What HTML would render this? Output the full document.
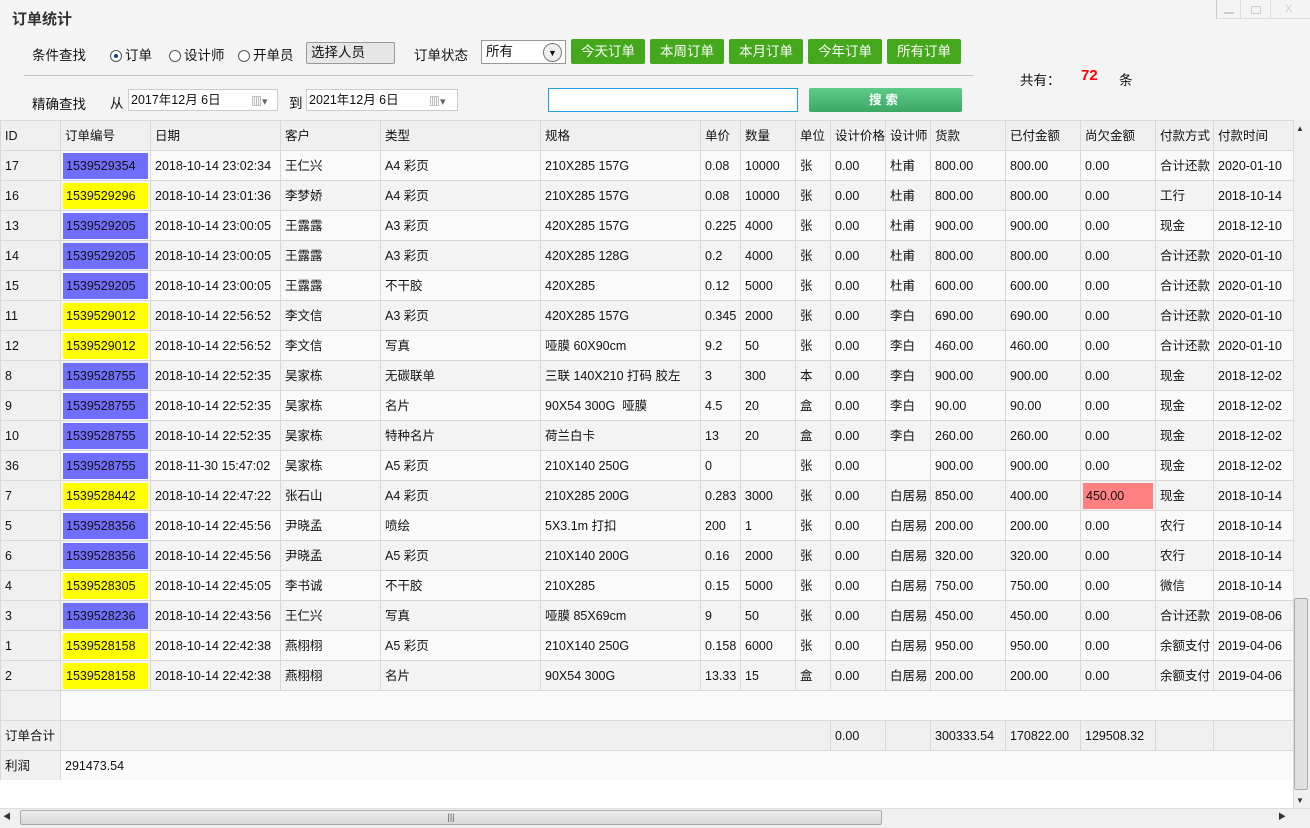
<!DOCTYPE html>
<html><head><meta charset="utf-8">
<style>
*{margin:0;padding:0;box-sizing:border-box}
body{width:1310px;height:828px;background:#f4f4f4;font-family:"Liberation Sans","Noto Sans CJK SC",sans-serif;font-size:12.5px;color:#111;position:relative;overflow:hidden}
.a{position:absolute;white-space:nowrap}
.btn{position:absolute;top:39px;height:25px;background:#45a81c;color:#fff;font-size:13.5px;text-align:center;line-height:25px;border-radius:2px}
.rad{display:inline-block;width:12px;height:12px;border:1px solid #555;border-radius:50%;vertical-align:-2px;margin-right:3px;background:#fff;position:relative}
.rad.on::after{content:"";position:absolute;left:3px;top:3px;width:4px;height:4px;border-radius:50%;background:#1a3a8a}
table{position:absolute;left:0;top:120px;border-collapse:collapse;table-layout:fixed;width:1293px}
td{height:30px;line-height:28px;border:1px solid #d8d8d8;padding:0 4px;white-space:nowrap;overflow:hidden;background:#fafafa;vertical-align:middle}
tr:nth-child(odd) td{background:#f3f3f3}
tr.h td{background:#f0f0f0}
td:first-child{background:#f0f0f0!important}
td.b,td.y,td.r{padding:0}
td.b span,td.y span,td.r span{display:block;margin:1px 2px;height:26px;line-height:26px;padding-left:3px}
td.b span{background:#6f6ffc}
td.y span{background:#ffff00}
td.r span{background:#ff8080}
</style></head><body>
<div class="a" style="left:12px;top:8px;font-size:15px;font-weight:bold;color:#333">订单统计</div>
<div class="a" style="left:1216px;top:0;width:94px;height:19px;border-left:1px solid #ccc;border-bottom:1px solid #ddd"></div>
<div class="a" style="left:1240px;top:0;height:19px;border-left:1px solid #ddd"></div>
<div class="a" style="left:1270px;top:0;height:19px;border-left:1px solid #ddd"></div>
<div class="a" style="left:1224px;top:12px;width:10px;height:2px;background:#ccc"></div>
<div class="a" style="left:1251px;top:6px;width:10px;height:8px;border:1px solid #ccc"></div>
<div class="a" style="left:1285px;top:3px;color:#ccc;font-size:11px">X</div>

<div class="a" style="left:32px;top:44px;font-size:13.5px">条件查找</div>
<div class="a" style="left:110px;top:44px;font-size:13.5px"><span class="rad on"></span>订单</div>
<div class="a" style="left:169px;top:44px;font-size:13.5px"><span class="rad"></span>设计师</div>
<div class="a" style="left:238px;top:44px;font-size:13.5px"><span class="rad"></span>开单员</div>
<div class="a" style="left:306px;top:42px;width:89px;height:22px;border:1px solid #999;border-radius:2px;background:#e6e6e6;padding:2px 4px;font-size:13.5px;line-height:16px">选择人员</div>
<div class="a" style="left:414px;top:44px;font-size:13.5px">订单状态</div>
<div class="a" style="left:481px;top:40px;width:85px;height:24px;border:1px solid #999;background:#fff;padding:3px 4px;font-size:13.5px;line-height:16px">所有</div>
<div class="a" style="left:543px;top:43px;width:19px;height:19px;border:1px solid #777;border-radius:50%;background:#eee;font-size:9px;text-align:center;line-height:18px">▼</div>
<div class="btn" style="left:571px;width:74px">今天订单</div>
<div class="btn" style="left:650px;width:74px">本周订单</div>
<div class="btn" style="left:729px;width:74px">本月订单</div>
<div class="btn" style="left:808px;width:74px">今年订单</div>
<div class="btn" style="left:887px;width:74px">所有订单</div>
<div class="a" style="left:24px;top:75px;width:950px;height:1px;background:#c4c4c4"></div>
<div class="a" style="left:1020px;top:69px;font-size:13.5px">共有：</div>
<div class="a" style="left:1081px;top:67px;font-size:15px;font-weight:bold;color:#f00">72</div>
<div class="a" style="left:1119px;top:69px;font-size:13.5px">条</div>

<div class="a" style="left:32px;top:93px;font-size:13.5px">精确查找</div>
<div class="a" style="left:110px;top:92px;font-size:13.5px">从</div>
<div class="a" style="left:128px;top:89px;width:150px;height:22px;background:#fff;border:1px solid #ccc;padding:3px 2px;line-height:15px">2017年12月 6日</div>
<div class="a" style="left:251px;top:93px;color:#666;font-size:11px">▥▾</div>
<div class="a" style="left:289px;top:92px;font-size:13.5px">到</div>
<div class="a" style="left:306px;top:89px;width:152px;height:22px;background:#fff;border:1px solid #ccc;padding:3px 2px;line-height:15px">2021年12月 6日</div>
<div class="a" style="left:429px;top:93px;color:#666;font-size:11px">▥▾</div>
<div class="a" style="left:548px;top:88px;width:250px;height:24px;background:#fff;border:1px solid #1ea0e8"></div>
<div class="a" style="left:809px;top:88px;width:153px;height:24px;background:linear-gradient(#5fcb8a,#3da864);border-radius:2px;color:#fff;font-weight:bold;text-align:center;line-height:24px;letter-spacing:4px">搜索</div>

<table>
<colgroup><col style="width:60px"><col style="width:90px"><col style="width:130px"><col style="width:100px"><col style="width:160px"><col style="width:160px"><col style="width:40px"><col style="width:55px"><col style="width:35px"><col style="width:55px"><col style="width:45px"><col style="width:75px"><col style="width:75px"><col style="width:75px"><col style="width:58px"><col style="width:80px"></colgroup>
<tr class="h"><td>ID</td><td>订单编号</td><td>日期</td><td>客户</td><td>类型</td><td>规格</td><td>单价</td><td>数量</td><td>单位</td><td>设计价格</td><td>设计师</td><td>货款</td><td>已付金额</td><td>尚欠金额</td><td>付款方式</td><td>付款时间</td></tr>
<tr><td>17</td><td class="b"><span>1539529354</span></td><td>2018-10-14 23:02:34</td><td>王仁兴</td><td>A4 彩页</td><td>210X285 157G</td><td>0.08</td><td>10000</td><td>张</td><td>0.00</td><td>杜甫</td><td>800.00</td><td>800.00</td><td>0.00</td><td>合计还款</td><td>2020-01-10</td></tr>
<tr><td>16</td><td class="y"><span>1539529296</span></td><td>2018-10-14 23:01:36</td><td>李梦娇</td><td>A4 彩页</td><td>210X285 157G</td><td>0.08</td><td>10000</td><td>张</td><td>0.00</td><td>杜甫</td><td>800.00</td><td>800.00</td><td>0.00</td><td>工行</td><td>2018-10-14</td></tr>
<tr><td>13</td><td class="b"><span>1539529205</span></td><td>2018-10-14 23:00:05</td><td>王露露</td><td>A3 彩页</td><td>420X285 157G</td><td>0.225</td><td>4000</td><td>张</td><td>0.00</td><td>杜甫</td><td>900.00</td><td>900.00</td><td>0.00</td><td>现金</td><td>2018-12-10</td></tr>
<tr><td>14</td><td class="b"><span>1539529205</span></td><td>2018-10-14 23:00:05</td><td>王露露</td><td>A3 彩页</td><td>420X285 128G</td><td>0.2</td><td>4000</td><td>张</td><td>0.00</td><td>杜甫</td><td>800.00</td><td>800.00</td><td>0.00</td><td>合计还款</td><td>2020-01-10</td></tr>
<tr><td>15</td><td class="b"><span>1539529205</span></td><td>2018-10-14 23:00:05</td><td>王露露</td><td>不干胶</td><td>420X285</td><td>0.12</td><td>5000</td><td>张</td><td>0.00</td><td>杜甫</td><td>600.00</td><td>600.00</td><td>0.00</td><td>合计还款</td><td>2020-01-10</td></tr>
<tr><td>11</td><td class="y"><span>1539529012</span></td><td>2018-10-14 22:56:52</td><td>李文信</td><td>A3 彩页</td><td>420X285 157G</td><td>0.345</td><td>2000</td><td>张</td><td>0.00</td><td>李白</td><td>690.00</td><td>690.00</td><td>0.00</td><td>合计还款</td><td>2020-01-10</td></tr>
<tr><td>12</td><td class="y"><span>1539529012</span></td><td>2018-10-14 22:56:52</td><td>李文信</td><td>写真</td><td>哑膜 60X90cm</td><td>9.2</td><td>50</td><td>张</td><td>0.00</td><td>李白</td><td>460.00</td><td>460.00</td><td>0.00</td><td>合计还款</td><td>2020-01-10</td></tr>
<tr><td>8</td><td class="b"><span>1539528755</span></td><td>2018-10-14 22:52:35</td><td>吴家栋</td><td>无碳联单</td><td>三联 140X210 打码 胶左</td><td>3</td><td>300</td><td>本</td><td>0.00</td><td>李白</td><td>900.00</td><td>900.00</td><td>0.00</td><td>现金</td><td>2018-12-02</td></tr>
<tr><td>9</td><td class="b"><span>1539528755</span></td><td>2018-10-14 22:52:35</td><td>吴家栋</td><td>名片</td><td>90X54 300G &nbsp;哑膜</td><td>4.5</td><td>20</td><td>盒</td><td>0.00</td><td>李白</td><td>90.00</td><td>90.00</td><td>0.00</td><td>现金</td><td>2018-12-02</td></tr>
<tr><td>10</td><td class="b"><span>1539528755</span></td><td>2018-10-14 22:52:35</td><td>吴家栋</td><td>特种名片</td><td>荷兰白卡</td><td>13</td><td>20</td><td>盒</td><td>0.00</td><td>李白</td><td>260.00</td><td>260.00</td><td>0.00</td><td>现金</td><td>2018-12-02</td></tr>
<tr><td>36</td><td class="b"><span>1539528755</span></td><td>2018-11-30 15:47:02</td><td>吴家栋</td><td>A5 彩页</td><td>210X140 250G</td><td>0</td><td></td><td>张</td><td>0.00</td><td></td><td>900.00</td><td>900.00</td><td>0.00</td><td>现金</td><td>2018-12-02</td></tr>
<tr><td>7</td><td class="y"><span>1539528442</span></td><td>2018-10-14 22:47:22</td><td>张石山</td><td>A4 彩页</td><td>210X285 200G</td><td>0.283</td><td>3000</td><td>张</td><td>0.00</td><td>白居易</td><td>850.00</td><td>400.00</td><td class="r"><span>450.00</span></td><td>现金</td><td>2018-10-14</td></tr>
<tr><td>5</td><td class="b"><span>1539528356</span></td><td>2018-10-14 22:45:56</td><td>尹晓孟</td><td>喷绘</td><td>5X3.1m 打扣</td><td>200</td><td>1</td><td>张</td><td>0.00</td><td>白居易</td><td>200.00</td><td>200.00</td><td>0.00</td><td>农行</td><td>2018-10-14</td></tr>
<tr><td>6</td><td class="b"><span>1539528356</span></td><td>2018-10-14 22:45:56</td><td>尹晓孟</td><td>A5 彩页</td><td>210X140 200G</td><td>0.16</td><td>2000</td><td>张</td><td>0.00</td><td>白居易</td><td>320.00</td><td>320.00</td><td>0.00</td><td>农行</td><td>2018-10-14</td></tr>
<tr><td>4</td><td class="y"><span>1539528305</span></td><td>2018-10-14 22:45:05</td><td>李书诚</td><td>不干胶</td><td>210X285</td><td>0.15</td><td>5000</td><td>张</td><td>0.00</td><td>白居易</td><td>750.00</td><td>750.00</td><td>0.00</td><td>微信</td><td>2018-10-14</td></tr>
<tr><td>3</td><td class="b"><span>1539528236</span></td><td>2018-10-14 22:43:56</td><td>王仁兴</td><td>写真</td><td>哑膜 85X69cm</td><td>9</td><td>50</td><td>张</td><td>0.00</td><td>白居易</td><td>450.00</td><td>450.00</td><td>0.00</td><td>合计还款</td><td>2019-08-06</td></tr>
<tr><td>1</td><td class="y"><span>1539528158</span></td><td>2018-10-14 22:42:38</td><td>燕栩栩</td><td>A5 彩页</td><td>210X140 250G</td><td>0.158</td><td>6000</td><td>张</td><td>0.00</td><td>白居易</td><td>950.00</td><td>950.00</td><td>0.00</td><td>余额支付</td><td>2019-04-06</td></tr>
<tr><td>2</td><td class="y"><span>1539528158</span></td><td>2018-10-14 22:42:38</td><td>燕栩栩</td><td>名片</td><td>90X54 300G</td><td>13.33</td><td>15</td><td>盒</td><td>0.00</td><td>白居易</td><td>200.00</td><td>200.00</td><td>0.00</td><td>余额支付</td><td>2019-04-06</td></tr>
<tr><td></td><td colspan="15" style="background:#fafafa"></td></tr>
<tr class="h"><td>订单合计</td><td colspan="8"></td><td>0.00</td><td></td><td>300333.54</td><td>170822.00</td><td>129508.32</td><td></td><td></td></tr>
<tr><td>利润</td><td colspan="15" style="background:#fafafa">291473.54</td></tr>
</table>
<div class="a" style="left:0;top:780px;width:1293px;height:28px;background:#fff"></div>
<div class="a" style="left:1293px;top:120px;width:17px;height:688px;background:#f0f0f0;border-left:1px solid #ddd"></div>
<div class="a" style="left:1296px;top:124px;font-size:8px;color:#333">▲</div>
<div class="a" style="left:1294px;top:598px;width:14px;height:192px;background:#e0e0e0;border:1px solid #aaa;border-radius:2px"></div>
<div class="a" style="left:1296px;top:796px;font-size:8px;color:#333">▼</div>
<div class="a" style="left:0;top:808px;width:1310px;height:20px;background:#f0f0f0;border-top:1px solid #ddd"></div>
<div class="a" style="left:3px;top:811px;font-size:8px;color:#333">◀</div>
<div class="a" style="left:20px;top:810px;width:862px;height:15px;background:linear-gradient(#eee,#d8d8d8);border:1px solid #aaa;border-radius:2px;text-align:center;font-size:9px;line-height:13px;color:#555">|||</div>
<div class="a" style="left:1278px;top:811px;font-size:8px;color:#333">▶</div>
</body></html>
